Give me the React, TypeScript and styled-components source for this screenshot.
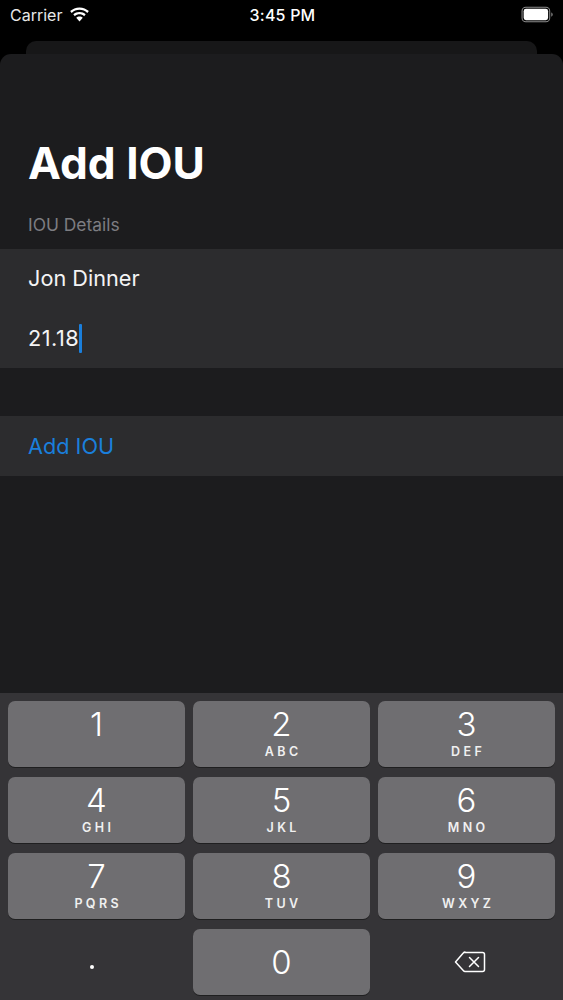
import React from "react";
import styled, { createGlobalStyle } from "styled-components";

const GlobalStyle = createGlobalStyle`
  html, body {
    margin: 0;
    padding: 0;
    background: #000;
  }
  body {
    font-family: Inter, "Liberation Sans", sans-serif;
    -webkit-font-smoothing: antialiased;
  }
`;

const Screen = styled.div`
  width: 563px;
  height: 1000px;
  display: flex;
  flex-direction: column;
  background: #000;
  overflow: hidden;
`;

const StatusBar = styled.div`
  height: 41px;
  flex: none;
  display: grid;
  grid-template-columns: 1fr auto 1fr;
  align-items: start;
  padding: 6px 8px 0 10px;
  box-sizing: border-box;
  color: #fff;
`;

const StatusLeft = styled.div`
  display: flex;
  align-items: center;
  gap: 7px;
  font-size: 16px;
  line-height: 18px;
  color: #e8e8e8;
`;

const StatusTime = styled.div`
  font-size: 16px;
  line-height: 18px;
  font-weight: 500;
  letter-spacing: 0.2px;
`;

const StatusRight = styled.div`
  display: flex;
  justify-content: flex-end;
`;

const BackCard = styled.div`
  height: 13px;
  flex: none;
  margin: 0 26px;
  background: #171718;
  border-radius: 10px 10px 0 0;
`;

const Sheet = styled.div`
  flex: 1;
  display: flex;
  flex-direction: column;
  background: #1c1c1e;
  border-radius: 11px 11px 0 0;
`;

const Title = styled.h1`
  margin: 80px 0 0 0;
  padding: 0 28px;
  font-size: 44.2px;
  line-height: 58px;
  font-weight: 700;
  color: #fff;
`;

const SectionLabel = styled.div`
  margin-top: 22px;
  padding: 0 28px;
  height: 35px;
  font-size: 17.4px;
  line-height: 22px;
  color: #7d7d82;
`;

const Group = styled.div<{ $gap?: number }>`
  margin-top: ${(p) => p.$gap ?? 0}px;
  background: #2c2c2e;
`;

const Row = styled.div<{ $accent?: boolean }>`
  height: 59.5px;
  display: flex;
  align-items: center;
  padding: 0 28px;
  font-size: 21.7px;
  color: ${(p) => (p.$accent ? "#1a7fdc" : "#f4f4f5")};
`;

const NameText = styled.span`
  margin-top: -2px;
`;

const AmountText = styled.span`
  letter-spacing: 0.5px;
`;

const Caret = styled.span`
  width: 3px;
  height: 29px;
  background: #1a7fdc;
  border-radius: 1px;
`;

const Spacer = styled.div`
  flex: 1;
`;

const Keyboard = styled.div`
  flex: none;
  height: 307px;
  box-sizing: border-box;
  padding: 8px 8px 0 8px;
  display: grid;
  grid-template-columns: repeat(3, 177px);
  grid-auto-rows: 66px;
  column-gap: 8px;
  row-gap: 10px;
  background: #353437;
`;

const Key = styled.div<{ $center?: boolean }>`
  display: flex;
  flex-direction: column;
  align-items: center;
  justify-content: ${(p) => (p.$center ? "center" : "flex-start")};
  border-radius: 7px;
  background: #6f6e71;
  box-shadow: 0 1px 0 #1f1f20;
  color: #fff;
`;

const FlatKey = styled.div`
  display: flex;
  align-items: center;
  justify-content: center;
  color: #fff;
`;

const Digit = styled.div<{ $center?: boolean }>`
  margin-top: ${(p) => (p.$center ? 0 : 5)}px;
  font-size: 33px;
  line-height: 36px;
  font-weight: 300;
`;

const Letters = styled.div`
  margin-top: 3px;
  font-size: 12.5px;
  line-height: 14px;
  font-weight: 600;
  letter-spacing: 3.4px;
  padding-left: 3.4px;
  color: #f0f0f0;
`;

const Dot = styled.span`
  width: 4px;
  height: 4px;
  margin: 10px 10px 0 0;
  border-radius: 50%;
  background: #fff;
`;

const DeleteWrap = styled.span`
  display: flex;
  margin: 0 0 1px 6px;
`;

const keys = [
  ["1", ""],
  ["2", "ABC"],
  ["3", "DEF"],
  ["4", "GHI"],
  ["5", "JKL"],
  ["6", "MNO"],
  ["7", "PQRS"],
  ["8", "TUV"],
  ["9", "WXYZ"],
];

const WifiIcon = () => (
  <svg width="21" height="16" viewBox="0 0 20 15" fill="#fff">
    <path d="M10 2.600c2.900 0 5.500 1.100 7.400 2.900l1.500-1.700C16.600 1.600 13.500.3 10 .3S3.400 1.600 1.100 3.800l1.500 1.700C4.500 3.700 7.100 2.600 10 2.600z" />
    <path d="M10 6.900c1.700 0 3.200.6 4.400 1.700l1.500-1.700C14.300 5.400 12.300 4.600 10 4.600s-4.300.8-5.900 2.300l1.500 1.700C6.800 7.500 8.300 6.900 10 6.900z" />
    <path d="M10 9c-1.200 0-2.300.4-3.100 1.200L10 13.700l3.100-3.500C12.300 9.400 11.200 9 10 9z" />
  </svg>
);

const BatteryIcon = () => (
  <svg width="34" height="17" viewBox="0 0 32 16">
    <rect x="1" y="1.200" width="26" height="13.600" rx="3.500" fill="none" stroke="#8a8a8a" strokeWidth="1" />
    <rect x="2.500" y="2.700" width="23" height="10.600" rx="2.200" fill="#fff" />
    <path d="M28.500 6v4c.8-.3 1.300-1.100 1.300-2s-.5-1.700-1.300-2z" fill="#8a8a8a" />
  </svg>
);

const DeleteIcon = () => (
  <svg width="32" height="24" viewBox="0 0 32 24" fill="none" stroke="#fff" strokeWidth="1.500" strokeLinejoin="round" strokeLinecap="round">
    <path d="M11 2.500h17.500a2 2 0 0 1 2 2v15a2 2 0 0 1-2 2H11c-.6 0-1.100-.2-1.500-.7L1.500 12l8-9.300c.4-.5.900-.7 1.500-.7z" />
    <path d="M15.500 7.500l9 9M24.500 7.500l-9 9" />
  </svg>
);

export default function App() {
  return (
    <Screen>
      <GlobalStyle />
      <StatusBar>
        <StatusLeft>
          Carrier
          <WifiIcon />
        </StatusLeft>
        <StatusTime>3:45 PM</StatusTime>
        <StatusRight>
          <BatteryIcon />
        </StatusRight>
      </StatusBar>
      <BackCard />
      <Sheet>
        <Title>Add IOU</Title>
        <SectionLabel>IOU Details</SectionLabel>
        <Group>
          <Row>
            <NameText>Jon Dinner</NameText>
          </Row>
          <Row>
            <AmountText>21.18</AmountText>
            <Caret />
          </Row>
        </Group>
        <Group $gap={48}>
          <Row $accent>Add IOU</Row>
        </Group>
        <Spacer />
        <Keyboard>
          {keys.map(([digit, letters]) => (
            <Key key={digit}>
              <Digit>{digit}</Digit>
              {letters && <Letters>{letters}</Letters>}
            </Key>
          ))}
          <FlatKey>
            <Dot />
          </FlatKey>
          <Key $center>
            <Digit $center>0</Digit>
          </Key>
          <FlatKey>
            <DeleteWrap>
              <DeleteIcon />
            </DeleteWrap>
          </FlatKey>
        </Keyboard>
      </Sheet>
    </Screen>
  );
}
